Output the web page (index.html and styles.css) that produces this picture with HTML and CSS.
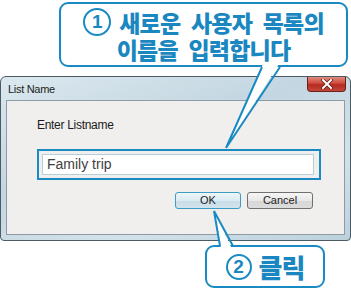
FILE: index.html
```html
<!DOCTYPE html>
<html lang="ko">
<head>
  <meta charset="utf-8"/>
  <title>List Name</title>
  <link rel="stylesheet" href="styles.css">
</head>
<body>
  <div class="stage">
    <div class="callout callout-top">
      <div class="line"><span class="num">1</span>새로운 사용자 목록의</div>
      <div class="line">이름을 입력합니다</div>
    </div>

    <div class="window">
      <div class="titlebar">
        <span class="title">List Name</span>
        <div class="close">
          <svg width="16" height="10" viewBox="0 0 16 10">
            <path d="M4 1 L12 9 M12 1 L4 9" stroke="#5a1a14" stroke-width="3.4" stroke-linecap="square"/>
            <path d="M4 1 L12 9 M12 1 L4 9" stroke="#fff" stroke-width="2" stroke-linecap="square"/>
          </svg>
        </div>
      </div>
      <div class="client">
        <div class="prompt">Enter Listname</div>
        <div class="field-focus">
          <div class="field">Family trip</div>
        </div>
        <div class="buttons">
          <div class="btn btn-ok">OK</div>
          <div class="btn">Cancel</div>
        </div>
      </div>
    </div>

    <div class="callout callout-bottom">
      <div class="line"><span class="num">2</span>클릭</div>
    </div>

    <!-- callout pointers -->
    <svg class="tails" width="351" height="290" viewBox="0 0 351 290">
      <polygon points="263,64 279,64 226,148" fill="#fff"/>
      <path d="M262 67 L226 148 L280 67" fill="none" stroke="#1a8bc2" stroke-width="2" stroke-linejoin="miter"/>
      <polygon points="221,249 232,249 214,211" fill="#fff"/>
      <path d="M220 246 L214 211 L233 246" fill="none" stroke="#1a8bc2" stroke-width="2"/>
    </svg>
  </div>
</body>
</html>
```

FILE: styles.css
```css
body {
  margin: 0;
  background: #fff;
  font-family: 'Liberation Sans', Arial, sans-serif;
}
.stage {
  position: relative;
  width: 351px;
  height: 290px;
  padding-top: 2px;
  box-sizing: border-box;
  overflow: hidden;
}
.callout {
  box-sizing: border-box;
  border: 2px solid #1a8bc2;
  border-radius: 9px;
  background: #fff;
  color: #1a87c0;
  font-family: 'Noto Sans CJK KR', sans-serif;
  font-weight: 900;
  display: flex;
  flex-direction: column;
  align-items: center;
  justify-content: center;
}
.callout-top {
  margin-left: 59px;
  width: 289px;
  height: 65px;
  padding-top: 1px;
  font-size: 23px;
  letter-spacing: -0.8px;
  word-spacing: 5px;
  line-height: 26px;
}
.callout-bottom {
  margin-top: 4px;
  margin-left: 205px;
  width: 120px;
  height: 43px;
  font-size: 26px;
  letter-spacing: -1px;
  line-height: 28px;
}
.line {
  display: flex;
  align-items: center;
  white-space: nowrap;
}
.num {
  display: inline-flex;
  align-items: center;
  justify-content: center;
  width: 28px;
  height: 28px;
  box-sizing: border-box;
  border: 2px solid #1a8bc2;
  border-radius: 50%;
  font-family: 'Liberation Sans', sans-serif;
  font-weight: 700;
  font-size: 19px;
  letter-spacing: 0;
  margin-right: 8px;
}
.callout-bottom .num {
  width: 26px;
  height: 26px;
  margin-right: 7px;
}
.window {
  margin-top: 9px;
  height: 165px;
  box-sizing: border-box;
  border: 1px solid #4c5a64;
  border-radius: 6px 6px 4px 4px;
  background: linear-gradient(160deg, #dbe8ef 0%, #c3d6e1 40%, #d3e2ea 70%, #bcd1dd 100%);
  display: flex;
  flex-direction: column;
  padding: 0 5px 5px 5px;
}
.titlebar {
  height: 23px;
  display: flex;
  align-items: flex-start;
  justify-content: space-between;
}
.title {
  font-size: 11px;
  color: #1c1c1c;
  margin-top: 6px;
  margin-left: 2px;
  letter-spacing: -0.3px;
}
.close {
  width: 37px;
  height: 14px;
  margin-right: -1px;
  border: 1px solid #6b2019;
  border-top: none;
  border-radius: 0 0 4px 4px;
  background: linear-gradient(#e08b80 0%, #cf4a3c 45%, #b42b1f 55%, #c5463a 100%);
  display: flex;
  align-items: center;
  justify-content: center;
}
.client {
  flex: 1;
  background: #f0efed;
  border: 1px solid #8d9ba5;
  padding: 17px 0 0 30px;
}
.prompt {
  font-size: 12px;
  color: #1c1c1c;
  letter-spacing: -0.3px;
}
.field-focus {
  margin-top: 17px;
  width: 284px;
  height: 31px;
  box-sizing: border-box;
  border: 2px solid #1a8bc2;
  padding: 3px;
}
.field {
  height: 21px;
  width: 272px;
  box-sizing: border-box;
  background: #fff;
  border: 1px solid #b5cfdc;
  font-size: 14px;
  color: #404040;
  padding-left: 4px;
  line-height: 19px;
}
.buttons {
  display: flex;
  gap: 6px;
  margin-top: 12px;
  margin-left: 138px;
}
.btn {
  width: 66px;
  height: 17px;
  box-sizing: border-box;
  border: 1px solid #707070;
  border-radius: 3px;
  background: linear-gradient(#f6f6f6 0%, #e8e8e8 50%, #d7d7d7 51%, #dcdcdc 100%);
  font-size: 11px;
  color: #1c1c1c;
  text-align: center;
  line-height: 15px;
}
.btn-ok {
  border-color: #3c9cc2;
  background: linear-gradient(#eef6fa 0%, #dcebf2 50%, #c8dde8 51%, #d2e4ed 100%);
}
.tails {
  position: absolute;
  top: 0;
  left: 0;
}
```
